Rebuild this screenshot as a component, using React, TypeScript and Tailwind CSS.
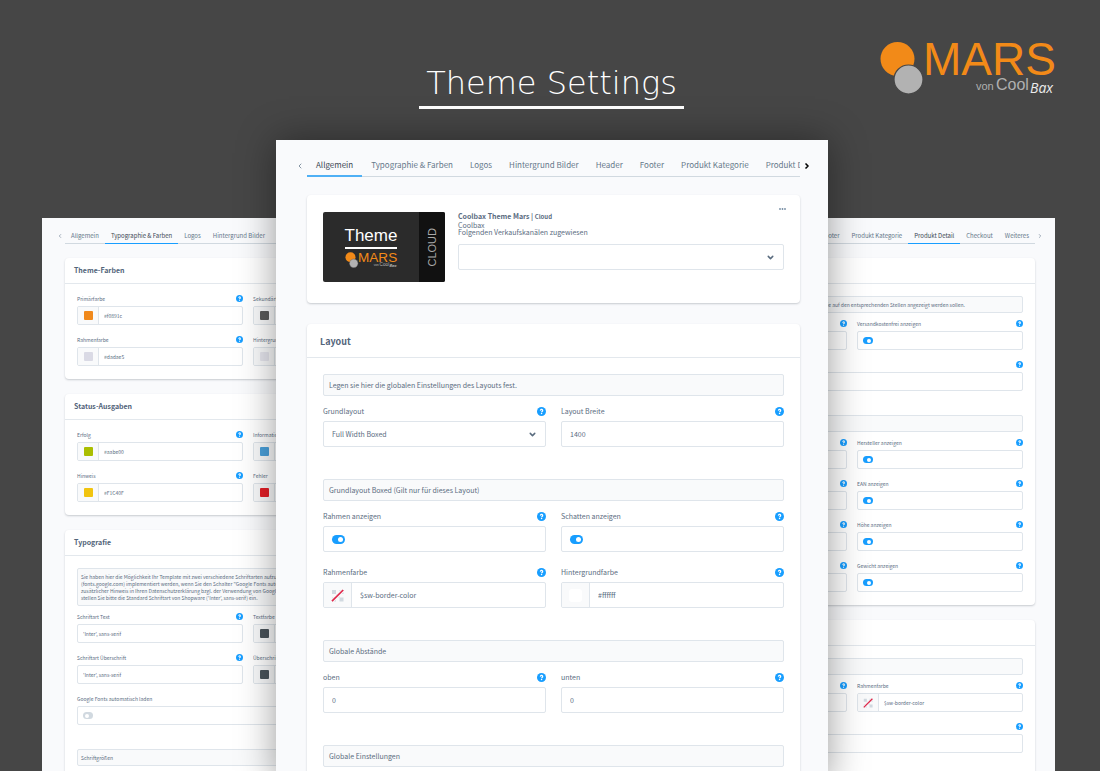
import { useId } from 'react';
import type { ReactNode } from 'react';
import { ChevronDown, ChevronLeft, ChevronRight } from 'lucide-react';
import clsx from 'clsx';

type Size = 'lg' | 'sm';

const TABS = [
  'Allgemein',
  'Typographie & Farben',
  'Logos',
  'Hintergrund Bilder',
  'Header',
  'Footer',
  'Produkt Kategorie',
  'Produkt Detail',
  'Checkout',
  'Weiteres',
];

const S = {
  lg: {
    tabs: 'gap-px',
    tab: 'h-[37px] pt-[12px] text-[8px]',
    tabPad: 'px-[8px]',
    tabActive: 'px-[9px] shadow-[inset_0_-2px_0_#4fb0f5]',
    prevCol: 'w-[31px] pr-[3px] pt-[14px]',
    nextCol: 'w-[28px] pl-[3px] pt-[14px]',
    cards: 'mt-[18px] gap-[21px] pl-[31px] pr-[28px]',
    head: 'h-[34px] px-[13px] pt-[2px] text-[9px]',
    body: 'px-4 pb-4 gap-8',
    bodyTop: 'pt-4',
    bodyTopPlain: 'pt-4',
    alert: 'px-[5px] py-[5px] leading-[10px]',
    afterAlert: 'gap-[9px]',
    grid: 'gap-x-[15px] gap-y-[14px]',
    label: 'h-[12px] mb-[4px]',
    field: 'h-[26px]',
    pad: 'px-[8px]',
    swatchCol: 'w-[28px]',
    swatch: 'size-[13px] rounded-[3px]',
    help: 'size-[9px]',
    toggle: 'h-[9px] w-[13px] px-[2px] before:size-[5px]',
    none: 'size-[13px]',
  },
  sm: {
    tabs: 'gap-0',
    tab: 'h-[26px] pt-[8px] text-[6px]',
    tabPad: 'px-[6px]',
    tabActive: 'px-[6px] shadow-[inset_0_-1px_0_#189eff]',
    prevCol: 'w-[23px] pr-[2px] pt-[9px]',
    nextCol: 'w-[20px] pl-[2px] pt-[9px]',
    cards: 'mt-[14px] gap-[15px] pl-[23px] pr-[20px]',
    head: 'h-[26px] px-[9px] text-[7px]',
    body: 'px-3 pb-[13px] gap-6',
    bodyTop: 'pt-3',
    bodyTopPlain: 'pt-[10px]',
    alert: 'px-[3px] py-[4px] leading-[7px]',
    afterAlert: 'gap-[6px]',
    grid: 'gap-x-[10px] gap-y-[10px]',
    label: 'h-[9px] mb-[3px]',
    field: 'h-[19px]',
    pad: 'px-[5px]',
    swatchCol: 'w-[21px]',
    swatch: 'size-[9px] rounded-[1px]',
    help: 'size-[7px]',
    toggle: 'h-[7px] w-[10px] px-[2px] before:size-[4px]',
    none: 'size-[10px]',
  },
};

function MarsLogo({ className }: { className: string }) {
  return (
    <svg viewBox="0 0 176 56" className={clsx('overflow-visible', className)} role="img" aria-label="MARS von CoolBax">
      <circle cx="18.500" cy="18" r="17" fill="#f28a18" />
      <circle cx="29.500" cy="38.500" r="14.500" fill="#b2b2b2" stroke="#464646" strokeWidth="1.200" />
      <text x="44" y="34" fontSize="46" fill="#f28a18" fontFamily="'Liberation Sans', Arial, sans-serif">MARS</text>
      <text x="97" y="49" fontSize="11" fill="#b0b0b0" fontFamily="'Liberation Sans', Arial, sans-serif">von</text>
      <text x="117" y="49" fontSize="16" fill="#b0b0b0" fontFamily="'Liberation Sans', Arial, sans-serif">Cool</text>
      <text x="151" y="52" fontSize="14" fontWeight="500" fontStyle="italic" fill="#ececec" fontFamily="'Open Sans', sans-serif">Bax</text>
    </svg>
  );
}

function HelpButton({ size }: { size: Size }) {
  return (
    <button type="button" aria-label="Hilfe" className={clsx('shrink-0', S[size].help)}>
      <svg viewBox="0 0 18 18" className="block size-full">
        <circle cx="9" cy="9" r="9" fill="#189eff" />
        <path d="M6.900 7.200a2.200 2.200 0 1 1 3.400 1.700c-.9.600-1.200.8-1.200 1.700" fill="none" stroke="#fff" strokeWidth="2.600" />
        <circle cx="9.100" cy="13.200" r="1.500" fill="#fff" />
      </svg>
    </button>
  );
}

function NoColor({ size }: { size: Size }) {
  return (
    <svg viewBox="0 0 13 13" className={S[size].none} aria-hidden="true">
      <path d="M1 1h4v4H1zM8.500 8.500h4v4h-4zM8.500 1h4v4h-4zM1 8.500h4v4H1zM5 5h3.500v3.500H5z" fill="#d1d9e0" />
      <path d="M1 12.200 12.200 1" stroke="#f9fafb" strokeWidth="3.500" />
      <path d="M1 12.200 12.200 1" stroke="#de294c" strokeWidth="1.700" />
    </svg>
  );
}

interface FieldProps {
  size: Size;
  label?: string;
  kind?: 'text' | 'select' | 'toggle' | 'color';
  value?: string;
  swatch?: string;
  off?: boolean;
  wide?: boolean;
  help?: boolean;
}

function Field({ size, label, kind = 'text', value = '', swatch, off, wide, help = true }: FieldProps) {
  const id = useId();
  const s = S[size];
  const aria = label ? undefined : 'Option';
  return (
    <div className={clsx('min-w-0', wide && 'col-span-2')}>
      <div className={clsx('flex items-center justify-between', s.label)}>
        <label htmlFor={id} className="whitespace-nowrap">{label}</label>
        {help && <HelpButton size={size} />}
      </div>
      <div className={clsx('flex items-stretch overflow-hidden rounded-[2px] border border-[#dfe5eb] bg-white', s.field)}>
        {kind === 'color' && (
          <button type="button" aria-label="Farbe wählen" className={clsx('flex shrink-0 items-center justify-center border-r border-[#dfe5eb] bg-[#f9fafb]', s.swatchCol)}>
            {swatch ? <span className={clsx(s.swatch, swatch)} /> : <NoColor size={size} />}
          </button>
        )}
        {kind === 'toggle' && (
          <div className={clsx('flex items-center', s.pad)}>
            <input
              id={id}
              type="checkbox"
              aria-label={aria}
              defaultChecked={!off}
              className={clsx('flex appearance-none items-center rounded-full bg-[#d1d9e0] before:block before:rounded-full before:bg-white checked:justify-end checked:bg-[#189eff]', s.toggle)}
            />
          </div>
        )}
        {kind === 'select' && <Select id={id} options={[value]} />}
        {(kind === 'text' || kind === 'color') && (
          <input id={id} type="text" aria-label={aria} defaultValue={value} className={clsx('w-full min-w-0 flex-1 bg-transparent outline-none', s.pad)} />
        )}
      </div>
    </div>
  );
}

function Select({ id, options, label }: { id?: string; options: string[]; label?: string }) {
  return (
    <div className="grid flex-1 items-center">
      <select id={id} aria-label={label} className="col-start-1 row-start-1 h-full w-full appearance-none bg-transparent px-[8px] outline-none">
        {options.map(o => <option key={o}>{o}</option>)}
      </select>
      <ChevronDown strokeWidth={4} className="pointer-events-none col-start-1 row-start-1 mr-[8px] size-[9px] justify-self-end" />
    </div>
  );
}

interface TabBarProps {
  size: Size;
  tabs: string[];
  active: string;
  alignEnd?: boolean;
  moreRight?: boolean;
}

function TabBar({ size, tabs, active, alignEnd, moreRight }: TabBarProps) {
  const s = S[size];
  const arrow = size === 'lg' ? 'size-[8px]' : 'size-[6px]';
  return (
    <nav className="flex">
      <button type="button" aria-label="Zurück" className={clsx('flex shrink-0 items-center justify-end text-[#8796a5]', s.prevCol)}>
        <ChevronLeft strokeWidth={3} className={arrow} />
      </button>
      <div className={clsx('flex min-w-0 flex-1 overflow-hidden shadow-[inset_0_-1px_0_#d1d9e0]', s.tabs, alignEnd && 'justify-end')}>
        {tabs.map(t => (
          <a
            key={t}
            href="#"
            className={clsx('flex shrink-0 items-center whitespace-nowrap', s.tab, t === active ? s.tabActive : s.tabPad, t === active ? 'text-[#3c4855]' : 'text-[#65788a]')}
          >
            {t}
          </a>
        ))}
      </div>
      <button type="button" aria-label="Weiter" className={clsx('flex shrink-0 items-center justify-start', s.nextCol, moreRight ? 'text-black' : 'text-[#8796a5]')}>
        <ChevronRight strokeWidth={moreRight ? 5 : 3} className={arrow} />
      </button>
    </nav>
  );
}

function Card({ size, title, plain, children }: { size: Size; title?: string; plain?: boolean; children: ReactNode }) {
  const s = S[size];
  return (
    <section className="rounded-[4px] bg-white shadow-[0_1px_2px_rgba(50,65,80,0.25)]">
      <h2 className={clsx('flex items-center border-b border-[#e3e8ed] font-bold text-[#52647a]', s.head)}>{title}</h2>
      <div className={clsx('flex flex-col', s.body, plain ? s.bodyTopPlain : s.bodyTop)}>{children}</div>
    </section>
  );
}

function Group({ size, note, noteClass, children }: { size: Size; note?: ReactNode; noteClass?: string; children?: ReactNode }) {
  const s = S[size];
  return (
    <div className={clsx('flex flex-col', s.afterAlert)}>
      {note !== undefined && (
        <p className={clsx('overflow-hidden rounded-[2px] border border-[#dfe5eb] bg-[#f9fafb] whitespace-pre', s.alert, noteClass)}>{note}</p>
      )}
      {children && <div className={clsx('grid grid-cols-2', s.grid)}>{children}</div>}
    </div>
  );
}

function ThemePreview() {
  return (
    <div className="flex h-[70px] w-[122px] shrink-0 overflow-hidden rounded-[2px] bg-[#2b2b2b] font-['Liberation_Sans',sans-serif]">
      <div className="flex flex-1 flex-col items-center justify-center">
        <span className="border-b-2 border-white text-[17px] leading-[22px] text-white">Theme</span>
        <MarsLogo className="mt-[3px] w-[52px]" />
      </div>
      <div className="flex w-[26px] items-center justify-center bg-[#111]">
        <span className="rotate-180 text-[11px] leading-none text-[#a9a9a9] [writing-mode:vertical-rl]">CLOUD</span>
      </div>
    </div>
  );
}

function ThemeCard() {
  return (
    <section className="flex h-[108px] gap-[13px] rounded-[4px] bg-white px-4 pt-[17px] shadow-[0_1px_2px_rgba(50,65,80,0.25)]">
      <ThemePreview />
      <div className="flex min-w-0 flex-1 flex-col">
        <div className="flex items-start justify-between leading-[9px]">
          <p className="font-bold">
            Coolbax Theme Mars | <span className="text-[6px]">Cloud</span>
          </p>
          <button type="button" aria-label="Mehr" className="-mt-[4px] -mr-[2px]">
            <svg viewBox="0 0 14 4" className="block h-[2px] w-[7px]" fill="#758ca3">
              <circle cx="2" cy="2" r="1.800" />
              <circle cx="7" cy="2" r="1.800" />
              <circle cx="12" cy="2" r="1.800" />
            </svg>
          </button>
        </div>
        <p className="leading-[8px]">Coolbax</p>
        <p className="leading-[7px]">Folgenden Verkaufskanälen zugewiesen</p>
        <div className="mt-[8px] flex h-[26px] rounded-[2px] border border-[#dfe5eb]">
          <Select options={['']} label="Verkaufskanäle" />
        </div>
      </div>
    </section>
  );
}

function GeneralPanel() {
  return (
    <div className="relative z-10 min-w-0 bg-[#f9fafc] text-[7px] shadow-[0_0_36px_rgba(0,0,0,0.4)]">
      <TabBar size="lg" tabs={TABS.slice(0, 8)} active="Allgemein" moreRight />
      <div className={clsx('flex flex-col', S.lg.cards)}>
        <ThemeCard />
        <Card size="lg" title="Layout">
          <Group size="lg" note="Legen sie hier die globalen Einstellungen des Layouts fest.">
            <Field size="lg" label="Grundlayout" kind="select" value="Full Width Boxed" />
            <Field size="lg" label="Layout Breite" value="1400" />
          </Group>
          <Group size="lg" note="Grundlayout Boxed (Gilt nur für dieses Layout)">
            <Field size="lg" label="Rahmen anzeigen" kind="toggle" />
            <Field size="lg" label="Schatten anzeigen" kind="toggle" />
            <Field size="lg" label="Rahmenfarbe" kind="color" value="$sw-border-color" />
            <Field size="lg" label="Hintergrundfarbe" kind="color" value="#ffffff" swatch="bg-white" />
          </Group>
          <Group size="lg" note="Globale Abstände">
            <Field size="lg" label="oben" value="0" />
            <Field size="lg" label="unten" value="0" />
          </Group>
          <Group size="lg" note="Globale Einstellungen" />
        </Card>
      </div>
    </div>
  );
}

const FONT_NOTE = [
  'Sie haben hier die Möglichkeit Ihr Template mit zwei verschiedene Schriftarten aufzubauen',
  '(fonts.google.com) implementiert werden, wenn Sie den Schalter "Google Fonts automatisch',
  'zusätzlicher Hinweis in Ihren Datenschutzerklärung bzgl. der Verwendung von Google Fonts',
  "stellen Sie bitte die Standard Schriftart von Shopware ('Inter', sans-serif) ein.",
].join('\n');

function ColorsPanel() {
  return (
    <div className="mt-[78px] min-w-0 overflow-hidden bg-[#f9fafc]">
      <div className="w-[409px] text-[5px]">
        <TabBar size="sm" tabs={TABS.slice(0, 4)} active="Typographie & Farben" />
        <div className={clsx('flex flex-col', S.sm.cards)}>
          <Card size="sm" title="Theme-Farben" plain>
            <Group size="sm">
              <Field size="sm" label="Primärfarbe" kind="color" value="#f0891c" swatch="bg-[#f0891c]" />
              <Field size="sm" label="Sekundärfarbe" kind="color" swatch="bg-[#5b5b5b]" />
              <Field size="sm" label="Rahmenfarbe" kind="color" value="#dadae5" swatch="bg-[#dadae5]" />
              <Field size="sm" label="Hintergrundfarbe" kind="color" swatch="bg-[#e6e6ee]" />
            </Group>
          </Card>
          <Card size="sm" title="Status-Ausgaben" plain>
            <Group size="sm">
              <Field size="sm" label="Erfolg" kind="color" value="#aabe00" swatch="bg-[#aabe00]" />
              <Field size="sm" label="Information" kind="color" swatch="bg-[#4aa0da]" />
              <Field size="sm" label="Hinweis" kind="color" value="#F1C40F" swatch="bg-[#f1c40f]" />
              <Field size="sm" label="Fehler" kind="color" swatch="bg-[#e31e26]" />
            </Group>
          </Card>
          <Card size="sm" title="Typografie">
            <Group size="sm" note={FONT_NOTE}>
              <Field size="sm" label="Schriftart Text" value="'Inter', sans-serif" />
              <Field size="sm" label="Textfarbe" kind="color" swatch="bg-[#4a545b]" />
              <Field size="sm" label="Schriftart Überschrift" value="'Inter', sans-serif" />
              <Field size="sm" label="Überschriftfarbe" kind="color" swatch="bg-[#4a545b]" />
              <Field size="sm" label="Google Fonts automatisch laden" kind="toggle" off wide />
            </Group>
            <Group size="sm" note="Schriftgrößen" />
          </Card>
        </div>
      </div>
    </div>
  );
}

function DetailPanel() {
  const rows = ['Hersteller anzeigen', 'EAN anzeigen', 'Höhe anzeigen', 'Gewicht anzeigen'];
  return (
    <div className="mt-[78px] flex min-w-0 justify-end overflow-hidden bg-[#f9fafc]">
      <div className="w-[409px] shrink-0 text-[5px]">
        <TabBar size="sm" tabs={TABS.slice(5)} active="Produkt Detail" alignEnd />
        <div className={clsx('flex flex-col', S.sm.cards)}>
          <Card size="sm">
            <Group size="sm" note="Sie auf den entsprechenden Stellen angezeigt werden sollen." noteClass="pr-[57px] text-right">
              <Field size="sm" kind="toggle" />
              <Field size="sm" label="Versandkostenfrei anzeigen" kind="toggle" />
              <Field size="sm" wide />
            </Group>
            <Group size="sm" note=" ">
              {rows.flatMap(r => [
                <Field key={`${r}-l`} size="sm" kind="toggle" />,
                <Field key={r} size="sm" label={r} kind="toggle" />,
              ])}
            </Group>
          </Card>
          <Card size="sm">
            <Group size="sm" note=" ">
              <Field size="sm" />
              <Field size="sm" label="Rahmenfarbe" kind="color" value="$sw-border-color" />
              <Field size="sm" wide />
            </Group>
            <Group size="sm" note=" " />
          </Card>
        </div>
      </div>
    </div>
  );
}

export default function App() {
  return (
    <div className="flex h-screen flex-col overflow-hidden bg-[#464646] font-['Noto_Sans_CJK_SC','Noto_Sans',sans-serif] text-[#5a6c7f]">
      <header className="grid h-[140px] shrink-0 grid-cols-[1fr_auto_1fr] items-start pl-12 pr-[45px]">
        <h1 className="col-start-2 mt-[60px] border-b-[3px] border-white px-[7px] font-['DejaVu_Sans','DejaVu_Sans_Light',sans-serif] text-[32px] leading-[46px] font-extralight text-white">
          Theme Settings
        </h1>
        <MarsLogo className="mt-[41px] w-[176px] justify-self-end" />
      </header>
      <main className="grid min-h-0 flex-1 grid-cols-[minmax(0,234fr)_minmax(0,552fr)_minmax(0,227fr)] pl-[42px] pr-[45px]">
        <ColorsPanel />
        <GeneralPanel />
        <DetailPanel />
      </main>
    </div>
  );
}
